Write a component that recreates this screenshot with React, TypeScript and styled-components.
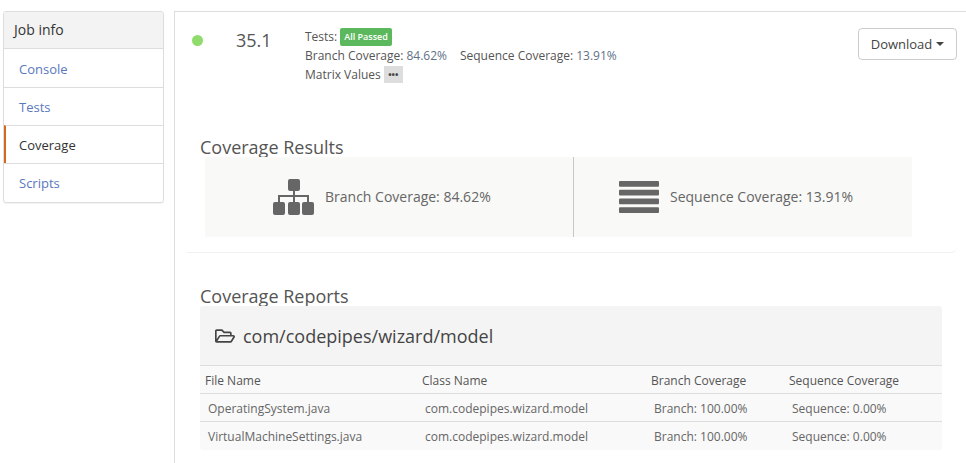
import { FC } from "react";
import styled, { createGlobalStyle } from "styled-components";
import { FaRegFolderOpen } from "react-icons/fa";

const GlobalStyle = createGlobalStyle`
  html, body {
    margin: 0;
    padding: 0;
    background: #fff;
  }
  body {
    font-family: "Open Sans", "Liberation Sans", sans-serif;
    font-size: 12px;
    color: #555;
    overflow: hidden;
  }
`;

// ----------------------------------------------------------------------------

const Page = styled.div`
  display: flex;
  align-items: flex-start;
  width: 966px;
  height: 463px;
  padding: 11px 0 0 3px;
  box-sizing: border-box;
`;

const Sidebar = styled.nav`
  flex: none;
  width: 161px;
  margin-right: 10px;
  padding-bottom: 1px;
  box-sizing: border-box;
  border: 1px solid #ddd;
  border-radius: 3px;
  box-shadow: 0 1px 1px rgba(0, 0, 0, 0.05);
  overflow: hidden;
`;

const SidebarTitle = styled.div`
  height: 34px;
  padding: 0 0 2px 10px;
  display: flex;
  align-items: center;
  background: #f3f3f3;
  color: #333;
  font-size: 14px;
`;

const SidebarItem = styled.a<{ $active?: boolean }>`
  display: flex;
  align-items: center;
  height: 37px;
  padding-left: ${(p) => (p.$active ? "13px" : "15px")};
  border-top: 1px solid #ddd;
  border-left: ${(p) => (p.$active ? "2px solid #d2691e" : "none")};
  color: ${(p) => (p.$active ? "#333" : "#5a78bd")};
  font-size: 13px;
  &:first-of-type {
    padding-top: 1px;
  }
`;

const Main = styled.main`
  flex: none;
  width: 792px;
  height: 452px;
  box-sizing: border-box;
  border-top: 1px solid #ddd;
  border-left: 1px solid #ddd;
`;

const JobHeader = styled.header`
  display: flex;
  align-items: flex-start;
  height: 123px;
  padding: 15px 9px 0 17px;
  box-sizing: border-box;
`;

const StatusDot = styled.span`
  flex: none;
  width: 11px;
  height: 11px;
  margin-top: 8px;
  border-radius: 50%;
  background: #8fdc6c;
`;

const Version = styled.div`
  flex: none;
  width: 69px;
  margin-left: 33px;
  font-size: 18px;
  line-height: 27px;
  color: #555;
`;

const Summary = styled.div`
  flex: 1;
  font-size: 12px;
  line-height: 19px;
`;

const SummaryLine = styled.div`
  display: flex;
  align-items: center;
  height: 19px;
`;

const Badge = styled.span`
  margin-left: 3px;
  padding: 0 4px;
  height: 18px;
  display: inline-flex;
  align-items: center;
  border-radius: 2px;
  background: #5cb85c;
  color: #fff;
  font-size: 9px;
  font-weight: 600;
`;

const Metric = styled.span`
  color: #5f7187;
  margin-left: 3px;
  margin-right: 13px;
`;

const MoreButton = styled.span`
  width: 19px;
  height: 17px;
  margin-left: 3px;
  display: inline-flex;
  align-items: center;
  justify-content: center;
  background: #ddd;
  color: #444;
  font-size: 9px;
  font-weight: 700;
  line-height: 1;
`;

const DownloadButton = styled.button`
  flex: none;
  width: 99px;
  height: 32px;
  margin-top: 1px;
  padding: 0;
  display: flex;
  align-items: center;
  justify-content: center;
  gap: 4px;
  background: #fff;
  border: 1px solid #ccc;
  border-radius: 4px;
  color: #444;
  font-family: inherit;
  font-size: 13px;
`;

const Caret = styled.span`
  width: 0;
  height: 0;
  border-top: 4px solid #444;
  border-left: 4px solid transparent;
  border-right: 4px solid transparent;
`;

// the box below paints over the descenders, same as the original page
const SectionTitle = styled.h3`
  margin: 0;
  height: 22px;
  font-size: 18px;
  font-weight: 400;
  line-height: 24px;
  color: #555;
`;

const ResultsSection = styled.section`
  margin-left: 12px;
  width: 770px;
  height: 118px;
  box-sizing: border-box;
  padding-left: 13px;
  border-bottom: 1px solid #f2f2f2;
  border-bottom-right-radius: 6px;
`;

const ResultsBox = styled.div`
  position: relative;
  display: flex;
  width: 707px;
  height: 80px;
  margin-left: 5px;
  background: #f9f9f7;
`;

const ResultCell = styled.div<{ $first?: boolean }>`
  display: flex;
  align-items: center;
  box-sizing: border-box;
  height: 100%;
  width: ${(p) => (p.$first ? "369px" : "338px")};
  padding-left: ${(p) => (p.$first ? "68px" : "45px")};
  border-right: ${(p) => (p.$first ? "1px solid #c8c8c8" : "none")};
  gap: 11px;
  font-size: 14px;
  color: #666;
  svg {
    flex: none;
    fill: #666;
  }
`;

const ResultLabel = styled.span`
  margin-bottom: 2px;
`;

const ReportsSection = styled.section`
  margin: 31px 0 0 25px;
`;

const ReportPanel = styled.div`
  position: relative;
  margin-left: 25px;
  width: 742px;
  border-radius: 3px;
  overflow: hidden;
  background: #f9f9f9;
`;

const PanelHeading = styled.div`
  display: flex;
  align-items: center;
  gap: 8px;
  height: 59px;
  padding-left: 15px;
  box-sizing: border-box;
  background: #f4f4f4;
  font-size: 18px;
  color: #444;
  svg {
    font-size: 20px;
    color: #444;
  }
`;

const ReportTable = styled.table`
  width: 100%;
  table-layout: fixed;
  border-collapse: collapse;
  font-size: 12px;
  color: #555;
  th,
  td {
    border-top: 1px solid #ddd;
    text-align: left;
    padding: 0;
    height: 27px;
  }
  th {
    font-weight: 400;
    height: 26px;
    padding: 1px 0 0 5px;
    color: #555;
  }
  td {
    padding-left: 8px;
    color: #666;
  }
  tbody tr:first-child td {
    height: 26px;
    padding-top: 1px;
  }
  tbody tr:last-child td {
    height: 28px;
  }
  th:nth-child(1) {
    width: 212px;
  }
  th:nth-child(2) {
    width: 224px;
  }
  th:nth-child(3) {
    width: 133px;
  }
`;

// ----------------------------------------------------------------------------

const SitemapIcon: FC = () => (
  <svg width="41" height="36" viewBox="0 0 41 36">
    <rect x="15" y="0" width="12" height="12" rx="2" />
    <rect x="0" y="23" width="12" height="13" rx="2" />
    <rect x="15" y="23" width="12" height="13" rx="2" />
    <rect x="29" y="23" width="12" height="13" rx="2" />
    <path d="M20 11h2v5h14v8h-2v-6H22v6h-2v-6H7v6H5v-8h15z" />
  </svg>
);

const SequenceIcon: FC = () => (
  <svg width="40" height="32" viewBox="0 0 40 32">
    <rect x="0" y="0" width="40" height="5.7" rx="1" />
    <rect x="0" y="8.8" width="40" height="5.7" rx="1" />
    <rect x="0" y="17.5" width="40" height="5.7" rx="1" />
    <rect x="0" y="26.3" width="40" height="5.7" rx="1" />
  </svg>
);

const navItems = ["Console", "Tests", "Coverage", "Scripts"];

const reportRows = [
  { file: "OperatingSystem.java", branch: "Branch: 100.00%", seq: "Sequence: 0.00%" },
  { file: "VirtualMachineSettings.java", branch: "Branch: 100.00%", seq: "Sequence: 0.00%" },
];

const App: FC = () => {
  return (
    <Page>
      <GlobalStyle />
      <Sidebar>
        <SidebarTitle>Job info</SidebarTitle>
        {navItems.map((item) => (
          <SidebarItem key={item} $active={item === "Coverage"}>
            {item}
          </SidebarItem>
        ))}
      </Sidebar>
      <Main>
        <JobHeader>
          <StatusDot />
          <Version>35.1</Version>
          <Summary>
            <SummaryLine>
              Tests:<Badge>All Passed</Badge>
            </SummaryLine>
            <SummaryLine>
              Branch Coverage:<Metric>84.62%</Metric>Sequence Coverage:<Metric>13.91%</Metric>
            </SummaryLine>
            <SummaryLine>
              Matrix Values<MoreButton>•••</MoreButton>
            </SummaryLine>
          </Summary>
          <DownloadButton>
            Download
            <Caret />
          </DownloadButton>
        </JobHeader>
        <ResultsSection>
          <SectionTitle>Coverage Results</SectionTitle>
          <ResultsBox>
            <ResultCell $first>
              <SitemapIcon />
              <ResultLabel>Branch Coverage: 84.62%</ResultLabel>
            </ResultCell>
            <ResultCell>
              <SequenceIcon />
              <ResultLabel>Sequence Coverage: 13.91%</ResultLabel>
            </ResultCell>
          </ResultsBox>
        </ResultsSection>
        <ReportsSection>
          <SectionTitle>Coverage Reports</SectionTitle>
        </ReportsSection>
        <ReportPanel>
          <PanelHeading>
            <FaRegFolderOpen />
            com/codepipes/wizard/model
          </PanelHeading>
          <ReportTable>
            <thead>
              <tr>
                <th>File Name</th>
                <th>Class Name</th>
                <th>Branch Coverage</th>
                <th>Sequence Coverage</th>
              </tr>
            </thead>
            <tbody>
              {reportRows.map((row) => (
                <tr key={row.file}>
                  <td>{row.file}</td>
                  <td>com.codepipes.wizard.model</td>
                  <td>{row.branch}</td>
                  <td>{row.seq}</td>
                </tr>
              ))}
            </tbody>
          </ReportTable>
        </ReportPanel>
      </Main>
    </Page>
  );
};

export default App;
